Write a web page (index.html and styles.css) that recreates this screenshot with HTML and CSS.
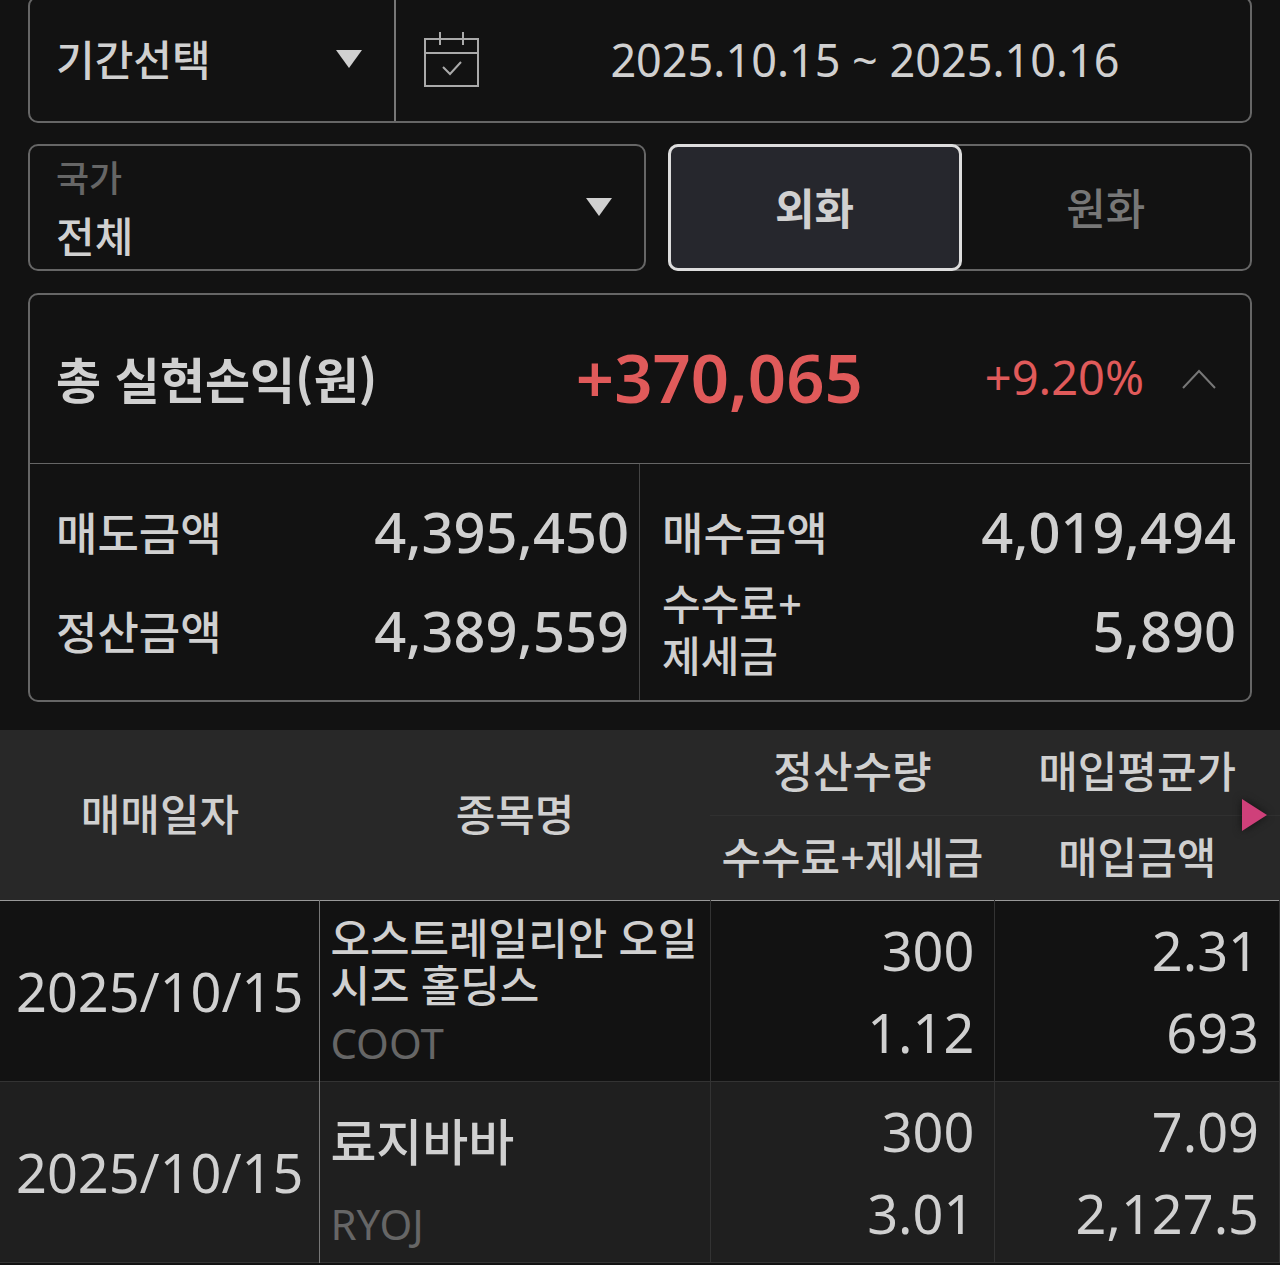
FILE: index.html
```html
<!DOCTYPE html>
<html lang="ko">
<head>
    <meta charset="UTF-8">
    <meta name="viewport" content="width=device-width, initial-scale=1.0">
    <title>해외주식 실현손익</title>
    <link rel="stylesheet" href="styles.css">
</head>
<body>

<main>
    <!-- Period filter -->
    <div class="box period">
        <div class="select-wrap period-type">
            <select aria-label="기간">
                <option>기간선택</option>
            </select>
            <svg class="arrow" width="26" height="18" viewBox="0 0 26 18"><path d="M0 0h26L13 18z"/></svg>
        </div>
        <button type="button" class="date-range">
            <svg class="calendar" width="56" height="56" viewBox="0 0 56 56">
                <path d="M1 7h53v47H1zM1 21h53M16 0v13M39 0v13"/>
                <path d="M19 35l7 7 11-12"/>
            </svg>
            <span>2025.10.15 ~ 2025.10.16</span>
        </button>
    </div>

    <!-- Country and currency -->
    <div class="filters">
        <div class="box select-wrap country">
            <label for="country">국가</label>
            <select id="country">
                <option>전체</option>
            </select>
            <svg class="arrow" width="26" height="18" viewBox="0 0 26 18"><path d="M0 0h26L13 18z"/></svg>
        </div>
        <div class="box currency">
            <button type="button" class="active" aria-pressed="true">외화</button>
            <button type="button" aria-pressed="false">원화</button>
        </div>
    </div>

    <!-- Total profit -->
    <section class="box summary">
        <div class="total">
            <h2>총 실현손익(원)</h2>
            <strong class="profit">+370,065</strong>
            <span class="rate">+9.20%</span>
            <button type="button" class="toggle" aria-label="접기">
                <svg width="34" height="20" viewBox="0 0 34 20"><path d="M1 19L17 2l16 17"/></svg>
            </button>
        </div>
        <dl class="amounts">
            <div><dt>매도금액</dt><dd>4,395,450</dd></div>
            <div><dt>매수금액</dt><dd>4,019,494</dd></div>
            <div><dt>정산금액</dt><dd>4,389,559</dd></div>
            <div><dt class="small">수수료+<br>제세금</dt><dd>5,890</dd></div>
        </dl>
    </section>

    <!-- Trades -->
    <div class="trades">
        <table>
            <thead>
                <tr>
                    <th class="col-date" rowspan="2">매매일자</th>
                    <th class="col-name" rowspan="2">종목명</th>
                    <th class="col-num split">정산수량</th>
                    <th class="col-num split">매입평균가</th>
                </tr>
                <tr>
                    <th>수수료+제세금</th>
                    <th>매입금액</th>
                </tr>
            </thead>
            <tbody>
                <tr>
                    <td class="date">2025/10/15</td>
                    <td class="name">
                        <div class="stock">오스트레일리안 오일시즈 홀딩스</div>
                        <div class="ticker">COOT</div>
                    </td>
                    <td class="num"><div>300</div><div>1.12</div></td>
                    <td class="num"><div>2.31</div><div>693</div></td>
                </tr>
                <tr>
                    <td class="date">2025/10/15</td>
                    <td class="name">
                        <div class="stock large">료지바바</div>
                        <div class="ticker">RYOJ</div>
                    </td>
                    <td class="num"><div>300</div><div>3.01</div></td>
                    <td class="num"><div>7.09</div><div>2,127.5</div></td>
                </tr>
            </tbody>
        </table>
        <button type="button" class="next" aria-label="다음 항목">
            <svg width="26" height="34" viewBox="0 0 26 34"><path d="M0 1l25 16L0 33z"/></svg>
        </button>
    </div>
</main>

</body>
</html>
```
FILE: styles.css
```css
* {
    box-sizing: border-box;
}
body {
    margin: 0;
    background-color: #121212;
    color: #d0d0d0;
    font-family: "Noto Sans", "Noto Sans CJK KR", sans-serif;
    font-weight: 500;
    overflow-x: hidden;
}
button, select {
    margin: 0;
    padding: 0;
    border: none;
    background: none;
    color: inherit;
    font: inherit;
    cursor: pointer;
}
select {
    appearance: none;
    width: 100%;
    font-family: "Noto Sans CJK KR", sans-serif;
    font-size: 42px;
}
svg {
    display: block;
}
.box {
    border: 2px solid #666;
    border-radius: 10px;
}

/* period */
.period {
    display: flex;
    height: 127px;
    margin: -4px 28px 0;
}
.select-wrap {
    position: relative;
}
.period-type {
    flex: 0 0 30%;
    border-right: 2px solid #777;
}
.period-type select {
    height: 100%;
    padding: 0 0 4px 26px;
}
.arrow {
    position: absolute;
    right: 32px;
    top: 52px;
    fill: #d0d0d0;
    pointer-events: none;
}
.date-range {
    flex: 1;
    display: flex;
    align-items: center;
    padding-left: 28px;
    font-size: 45px;
    font-weight: 400;
}
.date-range span {
    flex: 1;
    text-align: center;
}
.calendar {
    fill: none;
    stroke: #aaa;
    stroke-width: 2;
}

/* country, currency */
.filters {
    display: grid;
    grid-template-columns: 617fr 584fr;
    gap: 22px;
    height: 127px;
    margin: 21px 28px 22px;
}
.country {
    display: flex;
    flex-direction: column;
}
.country label {
    padding: 8px 26px 0;
    color: #666;
    font-size: 36px;
    line-height: 50px;
}
.country select {
    height: 56px;
    padding: 0 0 4px 26px;
}
.currency {
    display: flex;
}
.currency button {
    flex: 1;
    padding-bottom: 4px;
    color: #777;
    font-family: "Noto Sans CJK KR", sans-serif;
    font-size: 43px;
}
.currency .active {
    margin: -2px 0 -2px -2px;
    border: 3px solid #ddd;
    border-radius: 10px;
    background-color: #26272d;
    color: #d0d0d0;
    font-weight: 700;
}

/* summary */
.summary {
    margin: 0 28px 28px;
}
.total {
    display: flex;
    align-items: center;
    height: 169px;
    padding: 0 34px 0 26px;
    border-bottom: 1px solid #666;
}
.total h2, .profit, .rate {
    padding-bottom: 4px;
}
.total h2 {
    margin: 0 auto 0 0;
    font-family: "Noto Sans CJK KR", sans-serif;
    font-size: 49px;
    font-weight: 700;
}
.profit {
    margin-right: 122px;
    color: #e05a5a;
    font-size: 67px;
    font-weight: 600;
}
.rate {
    margin-right: 38px;
    color: #e05a5a;
    font-size: 47px;
    font-weight: 400;
}
.toggle svg {
    fill: none;
    stroke: #777;
    stroke-width: 2;
}
.amounts {
    display: grid;
    grid-template-columns: 1fr 1fr;
    margin: 0;
}
.amounts div {
    display: flex;
    justify-content: space-between;
    align-items: center;
    height: 118px;
    padding: 16px 14px 0 22px;
}
.amounts div:nth-child(odd) {
    padding-left: 26px;
    padding-right: 10px;
    border-right: 1px solid #444;
}
.amounts div:nth-child(n+3) {
    padding-top: 0;
    padding-bottom: 22px;
}
.amounts dt {
    font-size: 45px;
}
.amounts .small {
    font-size: 42px;
    line-height: 52px;
}
.amounts dd {
    margin: 0;
    font-size: 56px;
    font-weight: 500;
}

/* trades */
.trades {
    position: relative;
}
table {
    width: 100%;
    border-collapse: collapse;
    table-layout: fixed;
}
thead {
    background-color: #282828;
    border-bottom: 1px solid #999;
}
th {
    height: 85px;
    padding: 0;
    font-size: 43px;
    font-weight: 500;
    line-height: 60px;
    white-space: nowrap;
}
.split {
    border-bottom: 1px solid #303030;
}
.col-date {
    width: 25%;
}
.col-name {
    width: 30.5%;
}
tbody tr {
    height: 181px;
    border-bottom: 1px solid #333;
}
tbody tr:nth-child(even) {
    background-color: #1f1f1f;
}
td {
    padding: 0;
    border-right: 1px solid #333;
}
.date {
    border-right: 1px solid #777;
    font-size: 54px;
    font-weight: 400;
    text-align: center;
}
.name {
    padding: 0 10px 8px;
}
.stock {
    display: flex;
    align-items: center;
    height: 112px;
    font-size: 43px;
    line-height: 47px;
    word-break: break-all;
}
.large {
    font-size: 50px;
}
.ticker {
    color: #666;
    font-size: 42px;
    font-weight: 400;
    line-height: 50px;
}
.num {
    padding-right: 20px;
    font-size: 54px;
    font-weight: 400;
    line-height: 82px;
    text-align: right;
}
.next {
    position: absolute;
    top: 68px;
    right: 12px;
    filter: drop-shadow(0 0 4px #111);
}
.next svg {
    fill: #cf407a;
}
```
